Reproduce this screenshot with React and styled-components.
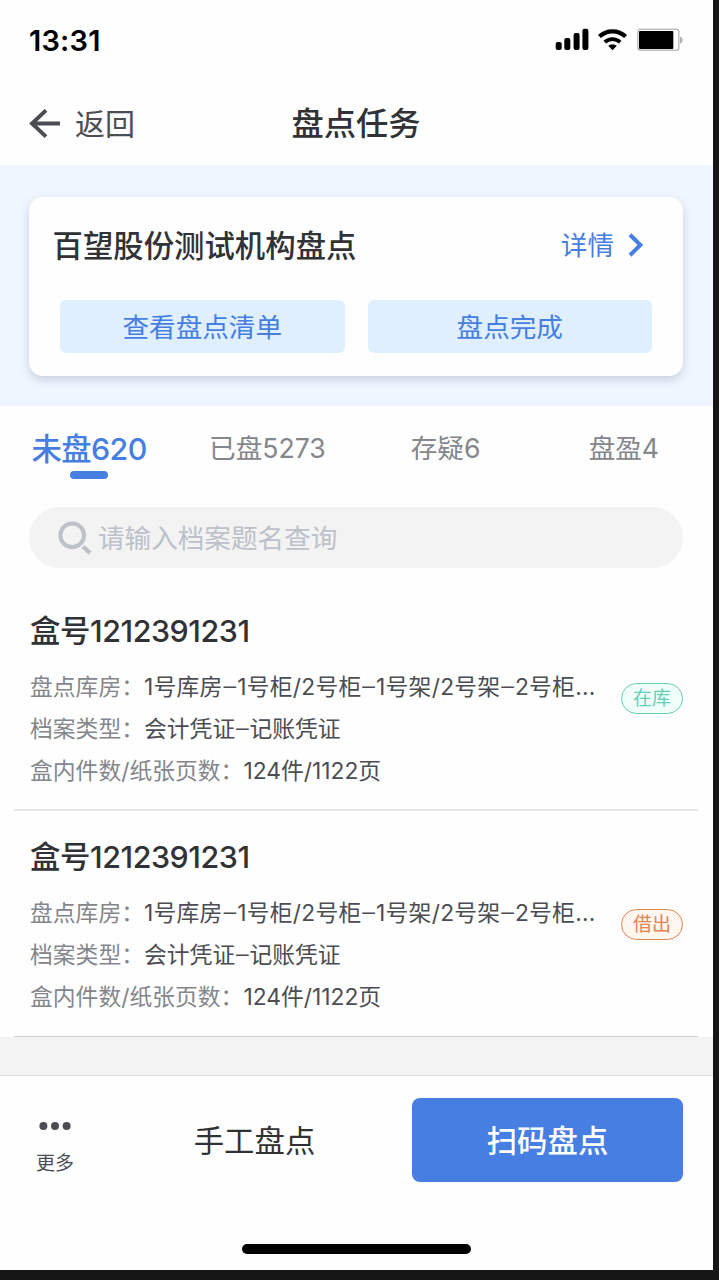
import React, { Fragment, useState } from "react";
import styled, { createGlobalStyle, ThemeProvider } from "styled-components";

const theme = {
  primary: "#467ee1",
  primaryLight: "#dfeffe",
  banner: "#f0f6ff",
  title: "#303235",
  text: "#4b4d52",
  label: "#84868c",
  placeholder: "#bcc1ca",
  fill: "#f3f3f3",
};

const tabs = [
  { name: "未盘", count: 620 },
  { name: "已盘", count: 5273 },
  { name: "存疑", count: 6 },
  { name: "盘盈", count: 4 },
];

const boxes = [
  {
    id: 1,
    title: "盒号1212391231",
    room: "1号库房–1号柜/2号柜–1号架/2号架–2号柜...",
    type: "会计凭证–记账凭证",
    amount: "124件/1122页",
    status: "在库",
  },
  {
    id: 2,
    title: "盒号1212391231",
    room: "1号库房–1号柜/2号柜–1号架/2号架–2号柜...",
    type: "会计凭证–记账凭证",
    amount: "124件/1122页",
    status: "借出",
  },
];

const statusColors = {
  在库: { color: "#66cdb5", background: "#f0fffa" },
  借出: { color: "#e08450", background: "#fff6f0" },
};

const GlobalStyle = createGlobalStyle`
  * {
    box-sizing: border-box;
  }

  body {
    margin: 0;
    background: #161616;
    font-family: Inter, "Noto Sans CJK SC", sans-serif;
  }

  button {
    border: none;
    padding: 0;
    background: none;
    font-family: inherit;
  }
`;

const Screen = styled.div`
  display: flex;
  flex-direction: column;
  width: 713px;
  height: 1270px;
  background: #fefefe;
  overflow: hidden;
  white-space: nowrap;
`;

const StatusBar = styled.div`
  display: flex;
  justify-content: space-between;
  align-items: center;
  height: 80px;
  padding: 0 30px 0 29px;
`;

const Time = styled.span`
  padding-top: 1px;
  color: #000;
  font-size: 29px;
  font-weight: 600;
  letter-spacing: 0.2px;
`;

const NavBar = styled.header`
  display: grid;
  grid-template-columns: 1fr auto 1fr;
  align-items: center;
  height: 85px;
  padding: 3px 29px 0 28px;
`;

const BackButton = styled.button`
  display: flex;
  align-items: center;
  gap: 15px;
  color: ${(props) => props.theme.text};
  font-size: 30px;
  line-height: 44px;
`;

const NavTitle = styled.h1`
  margin: 0;
  color: ${(props) => props.theme.title};
  font-size: 32.3px;
  font-weight: 500;
  line-height: 46px;
`;

const Banner = styled.section`
  height: 241px;
  padding: 32px 30px 0 29px;
  background: ${(props) => props.theme.banner};
`;

const Card = styled.div`
  height: 179px;
  padding: 27px 31px 0;
  border-radius: 14px;
  background: #fefefe;
  box-shadow: 0 4px 10px rgba(60, 80, 110, 0.22);
`;

const CardHead = styled.div`
  display: flex;
  justify-content: space-between;
  height: 44px;
  margin: 0 8px 32px -7.5px;
`;

const CardTitle = styled.h2`
  margin: 0;
  color: ${(props) => props.theme.title};
  font-size: 30.4px;
  font-weight: 500;
  line-height: 44px;
`;

const DetailLink = styled.button`
  display: flex;
  align-items: center;
  gap: 14px;
  height: 42px;
  color: ${(props) => props.theme.primary};
  font-size: 26.6px;
  line-height: 42px;
`;

const CardActions = styled.div`
  display: grid;
  grid-template-columns: 1fr 1fr;
  gap: 23px;
`;

const CardButton = styled.button`
  height: 53px;
  padding-bottom: 2px;
  border-radius: 6px;
  background: ${(props) => props.theme.primaryLight};
  color: ${(props) => props.theme.primary};
  font-size: 26.6px;
`;

const Tabs = styled.nav`
  display: grid;
  grid-template-columns: repeat(4, 1fr);
  height: 101px;
  padding-top: 20px;
`;

const Tab = styled.button`
  display: flex;
  flex-direction: column;
  align-items: center;
  color: ${(props) => (props.$active ? props.theme.primary : props.theme.label)};
  font-size: ${(props) => (props.$active ? 30.4 : 26.6)}px;
  font-weight: ${(props) => (props.$active ? 500 : 400)};
  letter-spacing: ${(props) => (props.$active ? "-0.6px" : "normal")};
  line-height: 45px;

  &::after {
    content: "";
    width: 38px;
    height: 8px;
    border-radius: 4px;
    background: ${(props) => (props.$active ? props.theme.primary : "none")};
  }
`;

const TabText = styled.span`
  height: 45px;
  padding-top: ${(props) => (props.$active ? 1 : 0)}px;
`;

const SearchBox = styled.label`
  display: flex;
  align-items: center;
  gap: 6px;
  flex: none;
  height: 61px;
  margin: 0 30px 17px 29px;
  padding: 0 29px;
  border-radius: 31px;
  background: ${(props) => props.theme.fill};
`;

const SearchInput = styled.input`
  flex: 1;
  border: none;
  padding: 0;
  outline: none;
  background: none;
  font-family: inherit;
  font-size: 26.6px;

  &::placeholder {
    color: ${(props) => props.theme.placeholder};
  }
`;

const List = styled.main`
  flex: none;
`;

const Item = styled.article`
  display: flex;
  justify-content: space-between;
  height: 226px;
  margin: 0 15px 0 14px;
  padding: 24px 15px 0 16px;
  border-bottom: ${(props) => (props.$last ? "1px solid #cfcfd0" : "2px solid #e6e6e7")};
`;

const ItemTitle = styled.h3`
  margin: 0 0 13px;
  color: ${(props) => props.theme.title};
  font-size: 30.4px;
  font-weight: 500;
  letter-spacing: -0.42px;
  line-height: 44px;
`;

const Row = styled.p`
  display: flex;
  height: 42px;
  margin: 0;
  color: ${(props) => props.theme.text};
  font-size: 22.8px;
  line-height: 42px;
`;

const RowLabel = styled.span`
  color: ${(props) => props.theme.label};
`;

const RowValue = styled.span`
  letter-spacing: ${(props) => (props.$loose ? "0.25px" : "normal")};
`;

const Dash = styled.span`
  padding: 0 0.8px;
  font-family: "Liberation Sans", sans-serif;
  line-height: 1;
  vertical-align: 2px;
`;

const Tag = styled.span`
  display: flex;
  align-items: center;
  justify-content: center;
  flex: none;
  width: 62px;
  height: 31px;
  margin-top: 74px;
  border: 1px solid ${(props) => props.$tone.color};
  border-radius: 16px;
  background: ${(props) => props.$tone.background};
  color: ${(props) => props.$tone.color};
  font-size: 19px;
  line-height: 29px;
`;

const Spacer = styled.div`
  flex: 1;
  background: ${(props) => props.theme.fill};
`;

const Footer = styled.footer`
  display: flex;
  flex-direction: column;
  align-items: center;
  height: 195px;
  border-top: 1px solid #dcdcdd;
`;

const FooterActions = styled.div`
  display: flex;
  align-items: center;
  width: 100%;
  height: 84px;
  margin: 22px 0 62px;
  padding: 0 30px 0 29px;
`;

const MoreButton = styled.button`
  display: flex;
  flex-direction: column;
  align-items: center;
  gap: 19px;
  width: 52px;
  padding-top: 20px;
  color: ${(props) => props.theme.text};
  font-size: 19px;
  line-height: 30px;
`;

const ManualButton = styled.button`
  flex: 1;
  padding: 0 0 2px 16px;
  color: ${(props) => props.theme.title};
  font-size: 30.4px;
`;

const ScanButton = styled.button`
  width: 271px;
  height: 84px;
  padding-bottom: 2px;
  border-radius: 8px;
  background: ${(props) => props.theme.primary};
  color: #fff;
  font-size: 30.4px;
  font-weight: 500;
`;

const HomeIndicator = styled.div`
  width: 229px;
  height: 10px;
  border-radius: 5px;
  background: #000;
`;

const StatusIcons = () => (
  <svg width="128" height="24" viewBox="0 0 128 24">
    <rect x="0.7" y="14" width="6" height="8" rx="2" />
    <rect x="9.3" y="10" width="6" height="12" rx="2" />
    <rect x="18.6" y="5" width="6" height="17" rx="2" />
    <rect x="27.4" y="0.7" width="6" height="21.3" rx="2" />
    <g fill="none" stroke="#000" strokeWidth="4.2">
      <path d="M44.4 8.6a18.8 18.8 0 0 1 26.2 0" />
      <path d="M49.8 14.2a11.3 11.3 0 0 1 15.4 0" strokeWidth="3.8" />
    </g>
    <path d="M57.5 22.2l-4.3-4.4a6.4 6.4 0 0 1 8.6 0z" />
    <rect x="82.8" y="1.2" width="41" height="21" rx="2.5" fill="#fefefe" stroke="#bdbdbd" strokeWidth="1.4" />
    <rect x="84" y="3" width="34.3" height="18" rx="1" />
    <path d="M125 8.5c3.4 1 3.4 6.2 0 7.2z" fill="#b0b0b0" />
  </svg>
);

const BackIcon = () => (
  <svg width="32" height="30" viewBox="0 0 32 30" fill="none" stroke="currentColor" strokeWidth="3.9">
    <path d="M32 14.5H4M18 1.3L4 14.5l14 13.2" />
  </svg>
);

const ChevronIcon = () => (
  <svg width="16" height="24" viewBox="0 0 16 24" fill="none" stroke="currentColor" strokeWidth="4">
    <path d="M2 1.8L12.4 12 2 22.2" />
  </svg>
);

const SearchIcon = () => (
  <svg width="34" height="34" viewBox="0 0 34 34" fill="none" stroke="#bcc1ca" strokeWidth="4">
    <circle cx="14.2" cy="14.3" r="11.8" />
    <path d="M25 25.5l7 6.5" strokeWidth="4.4" />
  </svg>
);

const DotsIcon = () => (
  <svg width="32" height="8" viewBox="0 0 32 8" fill="currentColor">
    <circle cx="4.4" cy="4" r="4" />
    <circle cx="16" cy="4" r="4" />
    <circle cx="27.6" cy="4" r="4" />
  </svg>
);

// Inter's en dash is too narrow between Chinese words
const withDashes = (text) =>
  text.split("–").map((part, i) => (
    <Fragment key={i}>
      {i > 0 && <Dash>–</Dash>}
      {part}
    </Fragment>
  ));

const BoxItem = ({ box, last }) => (
  <Item $last={last}>
    <div>
      <ItemTitle>{box.title}</ItemTitle>
      <Row>
        <RowLabel>盘点库房：</RowLabel>
        <RowValue $loose>{withDashes(box.room)}</RowValue>
      </Row>
      <Row>
        <RowLabel>档案类型：</RowLabel>
        <RowValue>{withDashes(box.type)}</RowValue>
      </Row>
      <Row>
        <RowLabel>盒内件数/纸张页数：</RowLabel>
        <RowValue>{box.amount}</RowValue>
      </Row>
    </div>
    <Tag $tone={statusColors[box.status]}>{box.status}</Tag>
  </Item>
);

const App = () => {
  const [activeTab, setActiveTab] = useState(0);
  const [keyword, setKeyword] = useState("");

  return (
    <ThemeProvider theme={theme}>
      <GlobalStyle />
      <Screen>
        <StatusBar>
          <Time>13:31</Time>
          <StatusIcons />
        </StatusBar>
        <NavBar>
          <BackButton>
            <BackIcon />
            返回
          </BackButton>
          <NavTitle>盘点任务</NavTitle>
        </NavBar>
        <Banner>
          <Card>
            <CardHead>
              <CardTitle>百望股份测试机构盘点</CardTitle>
              <DetailLink>
                详情
                <ChevronIcon />
              </DetailLink>
            </CardHead>
            <CardActions>
              <CardButton>查看盘点清单</CardButton>
              <CardButton>盘点完成</CardButton>
            </CardActions>
          </Card>
        </Banner>
        <Tabs>
          {tabs.map((tab, i) => (
            <Tab key={tab.name} $active={i === activeTab} onClick={() => setActiveTab(i)}>
              <TabText $active={i === activeTab}>{tab.name + tab.count}</TabText>
            </Tab>
          ))}
        </Tabs>
        <SearchBox>
          <SearchIcon />
          <SearchInput
            placeholder="请输入档案题名查询"
            value={keyword}
            onChange={(e) => setKeyword(e.target.value)}
          />
        </SearchBox>
        <List>
          {boxes.map((box, i) => (
            <BoxItem key={box.id} box={box} last={i === boxes.length - 1} />
          ))}
        </List>
        <Spacer />
        <Footer>
          <FooterActions>
            <MoreButton>
              <DotsIcon />
              更多
            </MoreButton>
            <ManualButton>手工盘点</ManualButton>
            <ScanButton>扫码盘点</ScanButton>
          </FooterActions>
          <HomeIndicator />
        </Footer>
      </Screen>
    </ThemeProvider>
  );
};

export default App;
